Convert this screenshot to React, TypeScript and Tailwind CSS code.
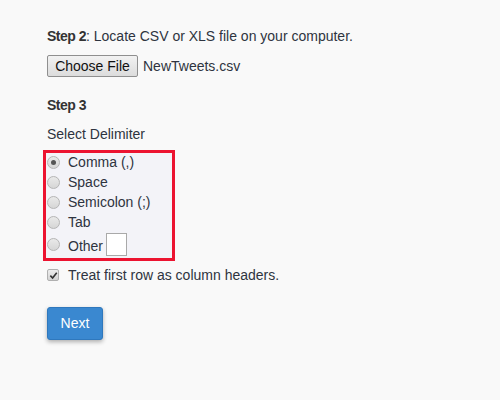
import React from "react";

function Radio({ checked }: { checked?: boolean }) {
  return (
    <span className="inline-flex h-[13px] w-[13px] shrink-0 items-center justify-center rounded-full border border-[#b5b5b5] bg-gradient-to-b from-[#e9e9e9] to-[#d6d6d6]">
      {checked ? <span className="h-[5px] w-[5px] rounded-full bg-[#555]" /> : null}
    </span>
  );
}

export default function App() {
  const opts = ["Comma (,)", "Space", "Semicolon (;)", "Tab"];
  return (
    <div className="h-[400px] w-[500px] bg-[#f9f9f9] pl-[47px] pt-[27px] text-[14px] text-[#2e3440] [font-family:'Liberation_Sans',Arial,sans-serif]">
      <div className="h-[18px] leading-[18px]">
        <span className="font-bold tracking-[-0.5px] text-[#333]">Step 2</span>: Locate CSV or XLS file on your computer.
      </div>
      <div className="mt-[10px] flex h-[22px] items-center">
        <span className="flex h-[22px] w-[91px] items-center justify-center rounded-[2px] border border-[#8f8f8f] bg-gradient-to-b from-[#f2f2f2] to-[#dcdcdc] text-[14px] text-[#111]">
          Choose File
        </span>
        <span className="ml-[5px]">NewTweets.csv</span>
      </div>
      <div className="mt-[19px] h-[18px] font-bold leading-[18px] tracking-[-0.5px] text-[#333]">Step 3</div>
      <div className="mt-[11px] h-[18px] leading-[18px]">Select Delimiter</div>
      <div className="-ml-[4px] mt-[7px] flex w-[132px] flex-col gap-[2px] border-[3px] border-[#ec1330] bg-[#f3f3f8] pb-[2px] pl-[1px]">
        {opts.map((o, i) => (
          <div key={o} className="flex h-[18px] items-center">
            <Radio checked={i === 0} />
            <span className="ml-[8px] leading-[18px]">{o}</span>
          </div>
        ))}
        <div className="flex h-[23px] items-center">
          <Radio />
          <span className="ml-[8px] mt-[2px] leading-[18px]">Other</span>
          <span className="ml-[3px] h-[23px] w-[21px] border border-[#a9a9a9] bg-white" />
        </div>
      </div>
      <div className="mt-[5px] flex h-[18px] items-center">
        <span className="flex h-[12px] w-[12px] items-center justify-center rounded-[2px] border border-[#b0b0b0] bg-gradient-to-b from-[#ededed] to-[#d4d4d4]">
          <svg width="9" height="9" viewBox="0 0 10 10">
            <path d="M1.5 5.2 L4 7.8 L8.6 2" stroke="#333" strokeWidth="1.8" fill="none" />
          </svg>
        </span>
        <span className="ml-[9px]">Treat first row as column headers.</span>
      </div>
      <button className="mt-[23px] block h-[33px] w-[56px] rounded-[3px] border border-[#2f78bd] bg-[#3a88d0] text-[14px] text-white shadow-[0_2px_4px_rgba(0,0,0,0.3)]">
        Next
      </button>
    </div>
  );
}
